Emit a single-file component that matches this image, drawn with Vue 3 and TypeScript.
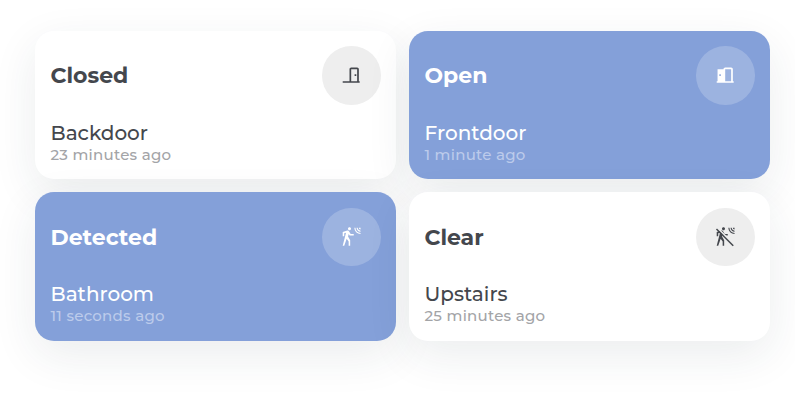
<script setup lang="ts">
interface Sensor {
  state: string
  name: string
  ago: string
  active: boolean
  icon: 'door-closed' | 'door-open' | 'motion' | 'motion-off'
}

const sensors: Sensor[] = [
  { state: 'Closed', name: 'Backdoor', ago: '23 minutes ago', active: false, icon: 'door-closed' },
  { state: 'Open', name: 'Frontdoor', ago: '1 minute ago', active: true, icon: 'door-open' },
  { state: 'Detected', name: 'Bathroom', ago: '11 seconds ago', active: true, icon: 'motion' },
  { state: 'Clear', name: 'Upstairs', ago: '25 minutes ago', active: false, icon: 'motion-off' },
]

const doorClosed = 'M16,11H18V13H16V11M12,3H19C20.11,3 21,3.89 21,5V19H22V21H2V19H10V5C10,3.89 10.89,3 12,3M12,5V19H19V5H12Z'
const doorOpen = 'M12,3C10.89,3 10,3.89 10,5H3V19H2V21H22V19H21V5C21,3.89 20.11,3 19,3H12M12,5H19V19H12V5M5,11H7V13H5V11Z'
const motion = 'M10,0.2C9,0.2 8.2,1 8.2,2C8.2,3 9,3.8 10,3.8C11,3.8 11.8,3 11.8,2C11.8,1 11,0.2 10,0.2M15.67,1A7.33,7.33 0 0,0 23,8.33V7A6,6 0 0,1 17,1H15.67M18.33,1C18.33,3.58 20.42,5.67 23,5.67V4.33C21.16,4.33 19.67,2.84 19.67,1H18.33M21,1A2,2 0 0,0 23,3V1H21M7.92,4.03C7.75,4.03 7.58,4.06 7.42,4.11L2,5.8V11H3.8V7.33L5.91,6.67L2,22H3.8L6.67,13.89L9,17V22H10.8V15.59L8.31,11.05L9.04,8.18L10.12,10H15V8.2H11.38L9.38,4.87C9.08,4.37 8.54,4.03 7.92,4.03Z'
</script>

<template>
  <main class="grid">
    <article v-for="s in sensors" :key="s.name" class="card" :class="{ active: s.active }">
      <header class="top">
        <h2 class="state">{{ s.state }}</h2>
        <span class="badge">
          <svg class="icon" viewBox="0 0 24 24">
            <path v-if="s.icon === 'door-closed'" :d="doorClosed" fill-rule="evenodd" />
            <path v-else-if="s.icon === 'door-open'" :d="doorOpen" fill-rule="evenodd" />
            <path v-else-if="s.icon === 'motion'" :d="motion" />
            <template v-else>
              <mask id="slash-gap">
                <rect width="24" height="24" fill="#fff" />
                <path d="M2 0.2L24 22.2" stroke="#000" stroke-width="1.8" />
              </mask>
              <path :d="motion" mask="url(#slash-gap)" />
              <path d="M2.39,1.73L1.11,3L20.84,22.73L22.11,21.46Z" />
            </template>
          </svg>
        </span>
      </header>
      <div class="name">{{ s.name }}</div>
      <div class="ago">{{ s.ago }}</div>
    </article>
  </main>
</template>

<style>
body {
  background: #fff;
}
</style>

<style scoped>
.grid {
  box-sizing: border-box;
  height: 409px;
  overflow: hidden;
  padding: 31px 25px 0 35px;
  display: grid;
  grid-template-columns: 361px 361px;
  grid-template-rows: 148.4px 148.4px;
  gap: 13px;
  font-family: Montserrat, Inter, sans-serif;
}
.card {
  box-sizing: border-box;
  padding: 15.3px 15.4px 0 15.5px;
  border-radius: 19px;
  background: #fff;
  color: #44474d;
  box-shadow: 0 14px 45px rgba(35, 55, 65, 0.09);
}
.card.active {
  background: #84a0d9;
  color: #fff;
}
.top {
  display: flex;
  align-items: center;
  justify-content: space-between;
  height: 58.5px;
}
.state {
  margin: 0;
  padding-top: 1.4px;
  font-size: 22px;
  line-height: 28px;
  font-weight: 700;
}
.badge {
  width: 58.5px;
  height: 58.5px;
  border-radius: 50%;
  background: #eee;
  display: flex;
  align-items: center;
  justify-content: center;
}
.active .badge {
  background: rgba(255, 255, 255, 0.2);
}
.icon {
  width: 20.4px;
  height: 20.4px;
  fill: currentColor;
}
.name {
  margin-top: 14.9px;
  font-size: 20px;
  line-height: 26px;
  font-weight: 500;
  white-space: nowrap;
}
.ago {
  font-size: 15px;
  line-height: 18px;
  font-weight: 500;
  letter-spacing: 0.26px;
  color: #a3a4a7;
  white-space: nowrap;
}
.active .ago {
  color: #bccbeb;
}
</style>
